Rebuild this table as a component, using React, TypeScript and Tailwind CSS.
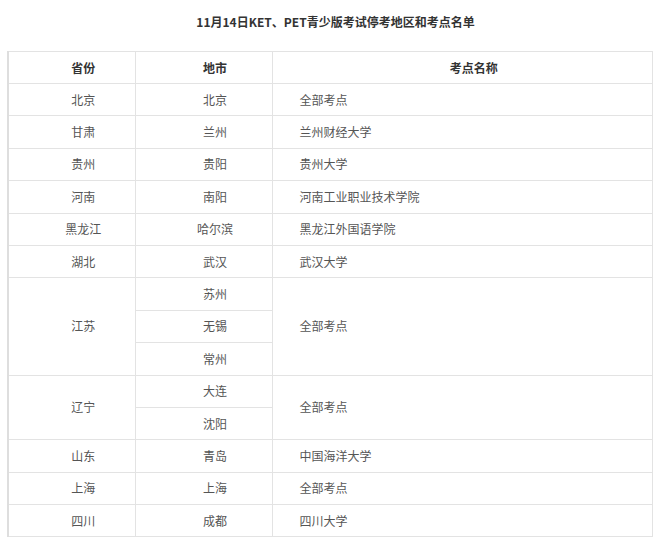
import React from "react";

type Row = { prov: string; cities: string[]; site: string };

const rows: Row[] = [
  { prov: "北京", cities: ["北京"], site: "全部考点" },
  { prov: "甘肃", cities: ["兰州"], site: "兰州财经大学" },
  { prov: "贵州", cities: ["贵阳"], site: "贵州大学" },
  { prov: "河南", cities: ["南阳"], site: "河南工业职业技术学院" },
  { prov: "黑龙江", cities: ["哈尔滨"], site: "黑龙江外国语学院" },
  { prov: "湖北", cities: ["武汉"], site: "武汉大学" },
  { prov: "江苏", cities: ["苏州", "无锡", "常州"], site: "全部考点" },
  { prov: "辽宁", cities: ["大连", "沈阳"], site: "全部考点" },
  { prov: "山东", cities: ["青岛"], site: "中国海洋大学" },
  { prov: "上海", cities: ["上海"], site: "全部考点" },
  { prov: "四川", cities: ["成都"], site: "四川大学" },
];

const cell = "border border-[#e3e3e3] h-[32.4px] py-0 pr-0";

export default function App() {
  return (
    <div
      className="w-[665px] h-[551px] bg-white text-[12px] text-[#555]"
      style={{ fontFamily: '"Noto Sans CJK SC", "Noto Sans", sans-serif' }}
    >
      <div className="pt-[13px] h-[51px] pl-[6px] text-center font-bold text-[#333] leading-[18px]">
        11月14日KET、PET青少版考试停考地区和考点名单
      </div>
      <table className="ml-[7px] w-[646px] border-collapse table-fixed border-l-2 border-l-[#dedede]">
        <colgroup>
          <col className="w-[127px]" />
          <col className="w-[137px]" />
          <col />
        </colgroup>
        <thead>
          <tr className="font-bold text-[#333]">
            <th className={`${cell} pl-[23px] h-[32px] font-bold text-center`}>省份</th>
            <th className={`${cell} pl-[23px] h-[32px] font-bold text-center`}>地市</th>
            <th className={`${cell} pl-[23px] h-[32px] font-bold text-center`}>考点名称</th>
          </tr>
        </thead>
        <tbody>
          {rows.map((r) =>
            r.cities.map((c, i) => (
              <tr key={r.prov + c}>
                {i === 0 && (
                  <td className={`${cell} pl-[23px] text-center`} rowSpan={r.cities.length}>
                    {r.prov}
                  </td>
                )}
                <td className={`${cell} pl-[23px] text-center`}>{c}</td>
                {i === 0 && (
                  <td className={`${cell} pl-[27px]`} rowSpan={r.cities.length}>
                    {r.site}
                  </td>
                )}
              </tr>
            ))
          )}
        </tbody>
      </table>
    </div>
  );
}
